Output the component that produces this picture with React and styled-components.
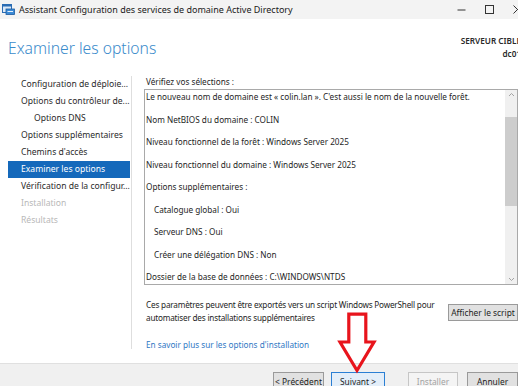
import React from 'react'
import styled, { createGlobalStyle } from 'styled-components'

const GlobalStyle = createGlobalStyle`
  html, body {
    margin: 0;
    padding: 0;
    overflow: hidden;
    background: #ffffff;
  }

  body {
    font-family: 'Noto Sans', 'Open Sans', sans-serif;
    color: #1e1e1e;
  }
`

const Window = styled.div`
  position: relative;
  width: 524px;
  height: 396px;
  display: flex;
  flex-direction: column;
  background: #ffffff;
`

const TitleBar = styled.div`
  height: 19px;
  display: flex;
  align-items: center;
  background: #f3f3f3;
  font-size: 9px;
  color: #1a1a1a;
  padding-left: 2px;

  .title {
    margin-left: 4px;
    flex: 1;
    white-space: nowrap;
  }
`

const Controls = styled.div`
  display: flex;
  align-items: center;
  height: 100%;
  gap: 19px;
  padding-right: 2px;
  color: #333;
`

const Header = styled.div`
  height: 57px;
  display: flex;
  justify-content: space-between;
  align-items: flex-start;
  padding: 0 3px 0 8px;
`

const Heading = styled.h1`
  margin: 18px 0 0;
  font-size: 15.7px;
  font-weight: 300;
  color: #3a8bcb;
`

const Target = styled.div`
  margin-top: 16px;
  text-align: right;
  font-size: 8.2px;
  font-weight: 600;
  line-height: 12.5px;
  color: #2a2a2a;
`

const Body = styled.div`
  flex: 0 0 287px;
  display: flex;
`

const Nav = styled.ul`
  list-style: none;
  margin: 0;
  padding: 0 1px 0 8px;
  width: 122px;
  border-right: 1px solid #dedede;
  height: 273px;
  font-size: 8.6px;
`

const NavItem = styled.li`
  height: 17px;
  line-height: 17px;
  padding-left: ${p => (p.$sub ? 26 : 13)}px;
  white-space: nowrap;
  overflow: hidden;
  color: ${p => (p.$active ? '#ffffff' : p.$disabled ? '#b8b8b8' : '#2a2a2a')};
  background: ${p => (p.$active ? '#1569bb' : 'transparent')};
`

const Content = styled.div`
  flex: 1;
  min-width: 0;
  padding: 0 6px 0 12px;
  display: flex;
  flex-direction: column;
  font-size: 8.2px;
`

const Label = styled.div`
  margin-left: 2px;
  line-height: 12px;
  height: 13px;
`

const Summary = styled.div`
  height: 194px;
  border: 1px solid #a9a9a9;
  display: flex;
  overflow: hidden;
`

const SummaryText = styled.div`
  flex: 1;
  padding: 1px 0 0 1px;
  overflow: hidden;
  white-space: nowrap;
`

const Line = styled.p`
  margin: 0 0 11.5px;
  line-height: 11px;
  padding-left: ${p => (p.$indent ? 8 : 0)}px;
`

const ScrollBar = styled.div`
  width: 12px;
  background: #f0f0f0;
  display: flex;
  flex-direction: column;
  align-items: center;
  justify-content: space-between;
  padding: 2px 0;
  position: relative;
`

const Thumb = styled.div`
  position: absolute;
  left: 0;
  right: 0;
  top: 27px;
  height: 89px;
  background: #cdcdcd;
`

const ExportRow = styled.div`
  display: flex;
  justify-content: space-between;
  align-items: flex-start;
  margin-top: 14px;
  margin-left: 2px;
  line-height: 12.5px;
`

const ExportText = styled.p`
  margin: 0;
  flex-shrink: 0;
  white-space: nowrap;
  letter-spacing: -0.2px;
`

const Button = styled.button`
  font-family: inherit;
  font-size: 8.4px;
  flex-shrink: 0;
  height: ${p => (p.$tall ? 19 : 17)}px;
  width: ${p => p.$w}px;
  padding: 0;
  border: 1px solid ${p => (p.$primary ? '#2a7fd4' : p.disabled ? '#c6c6c6' : '#9a9a9a')};
  background: ${p => (p.$primary ? '#e3eef9' : p.disabled ? '#f4f4f4' : '#e1e1e1')};
  color: ${p => (p.disabled ? '#a3a3a3' : '#1e1e1e')};
  white-space: nowrap;
`

const ExportButton = styled(Button)`
  margin-top: 5px;
`

const Link = styled.a`
  margin: 15px 0 0 2px;
  color: #2f78c4;
  text-decoration: none;
  line-height: 12px;
`

const Footer = styled.div`
  flex: 1;
  border-top: 1px solid #e0e0e0;
  background: #f0f0f0;
  display: flex;
  padding: 8px 6px 0 0;
  justify-content: flex-end;
  align-items: flex-start;
`

const ButtonGroup = styled.div`
  display: flex;
  gap: ${p => p.$gap}px;
  margin-left: ${p => p.$offset || 0}px;
`

const Arrow = styled.svg`
  position: absolute;
  left: 336px;
  top: 311px;
`

const AppIcon = () => (
  <svg width='13' height='11' viewBox='0 0 13 11'>
    <rect x='0.5' y='0.5' width='9' height='8' fill='#dbe9f7' stroke='#2b6cb3' />
    <rect x='0.5' y='0.5' width='9' height='2' fill='#2b6cb3' />
    <rect x='4' y='5' width='8.5' height='5.5' fill='#3b8ad6' stroke='#1d5a9e' strokeWidth='0.8' />
    <rect x='5.5' y='7' width='5.5' height='1' fill='#e6f0fa' />
  </svg>
)

const summary = [
  { text: "Le nouveau nom de domaine est « colin.lan ». C'est aussi le nom de la nouvelle forêt." },
  { text: 'Nom NetBIOS du domaine : COLIN' },
  { text: 'Niveau fonctionnel de la forêt : Windows Server 2025' },
  { text: 'Niveau fonctionnel du domaine : Windows Server 2025' },
  { text: 'Options supplémentaires :' },
  { text: 'Catalogue global : Oui', indent: true },
  { text: 'Serveur DNS : Oui', indent: true },
  { text: 'Créer une délégation DNS : Non', indent: true },
  { text: 'Dossier de la base de données : C:\\WINDOWS\\NTDS' }
]

const steps = [
  { label: 'Configuration de déploie...' },
  { label: 'Options du contrôleur de...' },
  { label: 'Options DNS', sub: true },
  { label: 'Options supplémentaires' },
  { label: "Chemins d'accès" },
  { label: 'Examiner les options', active: true },
  { label: 'Vérification de la configur...' },
  { label: 'Installation', disabled: true },
  { label: 'Résultats', disabled: true }
]

export default function App () {
  return (
    <Window>
      <GlobalStyle />
      <TitleBar>
        <AppIcon />
        <span className='title'>Assistant Configuration des services de domaine Active Directory</span>
        <Controls>
          <svg width='9' height='9' viewBox='0 0 9 9'>
            <line x1='0.5' y1='5' x2='8.5' y2='5' stroke='#333' strokeWidth='1' />
          </svg>
          <svg width='9' height='9' viewBox='0 0 9 9'>
            <rect x='0.5' y='0.5' width='8' height='8' fill='none' stroke='#333' strokeWidth='1' />
          </svg>
          <svg width='9' height='9' viewBox='0 0 9 9'>
            <path d='M0.5 0.5 L8.5 8.5 M8.5 0.5 L0.5 8.5' stroke='#333' strokeWidth='1' />
          </svg>
        </Controls>
      </TitleBar>

      <Header>
        <Heading>Examiner les options</Heading>
        <Target>
          <div>SERVEUR CIBLE</div>
          <div>dc01</div>
        </Target>
      </Header>

      <Body>
        <Nav>
          {steps.map(s => (
            <NavItem key={s.label} $sub={s.sub} $active={s.active} $disabled={s.disabled}>
              {s.label}
            </NavItem>
          ))}
        </Nav>

        <Content>
          <Label>Vérifiez vos sélections :</Label>
          <Summary>
            <SummaryText>
              {summary.map(l => (
                <Line key={l.text} $indent={l.indent}>{l.text}</Line>
              ))}
            </SummaryText>
            <ScrollBar>
              <svg width='7' height='5' viewBox='0 0 7 5'>
                <path d='M1 4 L3.5 1.5 L6 4' fill='none' stroke='#9a9a9a' strokeWidth='0.9' />
              </svg>
              <Thumb />
              <svg width='7' height='5' viewBox='0 0 7 5'>
                <path d='M1 1 L3.5 3.5 L6 1' fill='none' stroke='#9a9a9a' strokeWidth='0.9' />
              </svg>
            </ScrollBar>
          </Summary>

          <ExportRow>
            <ExportText>
              Ces paramètres peuvent être exportés vers un script Windows PowerShell pour<br />
              automatiser des installations supplémentaires
            </ExportText>
            <ExportButton $w={70}>Afficher le script</ExportButton>
          </ExportRow>

          <Link href='#'>En savoir plus sur les options d'installation</Link>
        </Content>
      </Body>

      <Footer>
        <ButtonGroup $gap={7}>
          <Button $tall $w={51}>&lt; Précédent</Button>
          <Button $tall $primary $w={54}>Suivant &gt;</Button>
        </ButtonGroup>
        <ButtonGroup $gap={9} $offset={23}>
          <Button $tall disabled $w={50}>Installer</Button>
          <Button $tall $w={51}>Annuler</Button>
        </ButtonGroup>
      </Footer>

      <Arrow width='42' height='64' viewBox='0 0 42 64'>
        <path
          d='M12.8 3.2 L29.8 3.2 L29.8 31 L38 31 L21 59.5 L4 31 L12.8 31 Z'
          fill='none'
          stroke='#e8141c'
          strokeWidth='3.2'
          strokeLinejoin='miter'
        />
      </Arrow>
    </Window>
  )
}
